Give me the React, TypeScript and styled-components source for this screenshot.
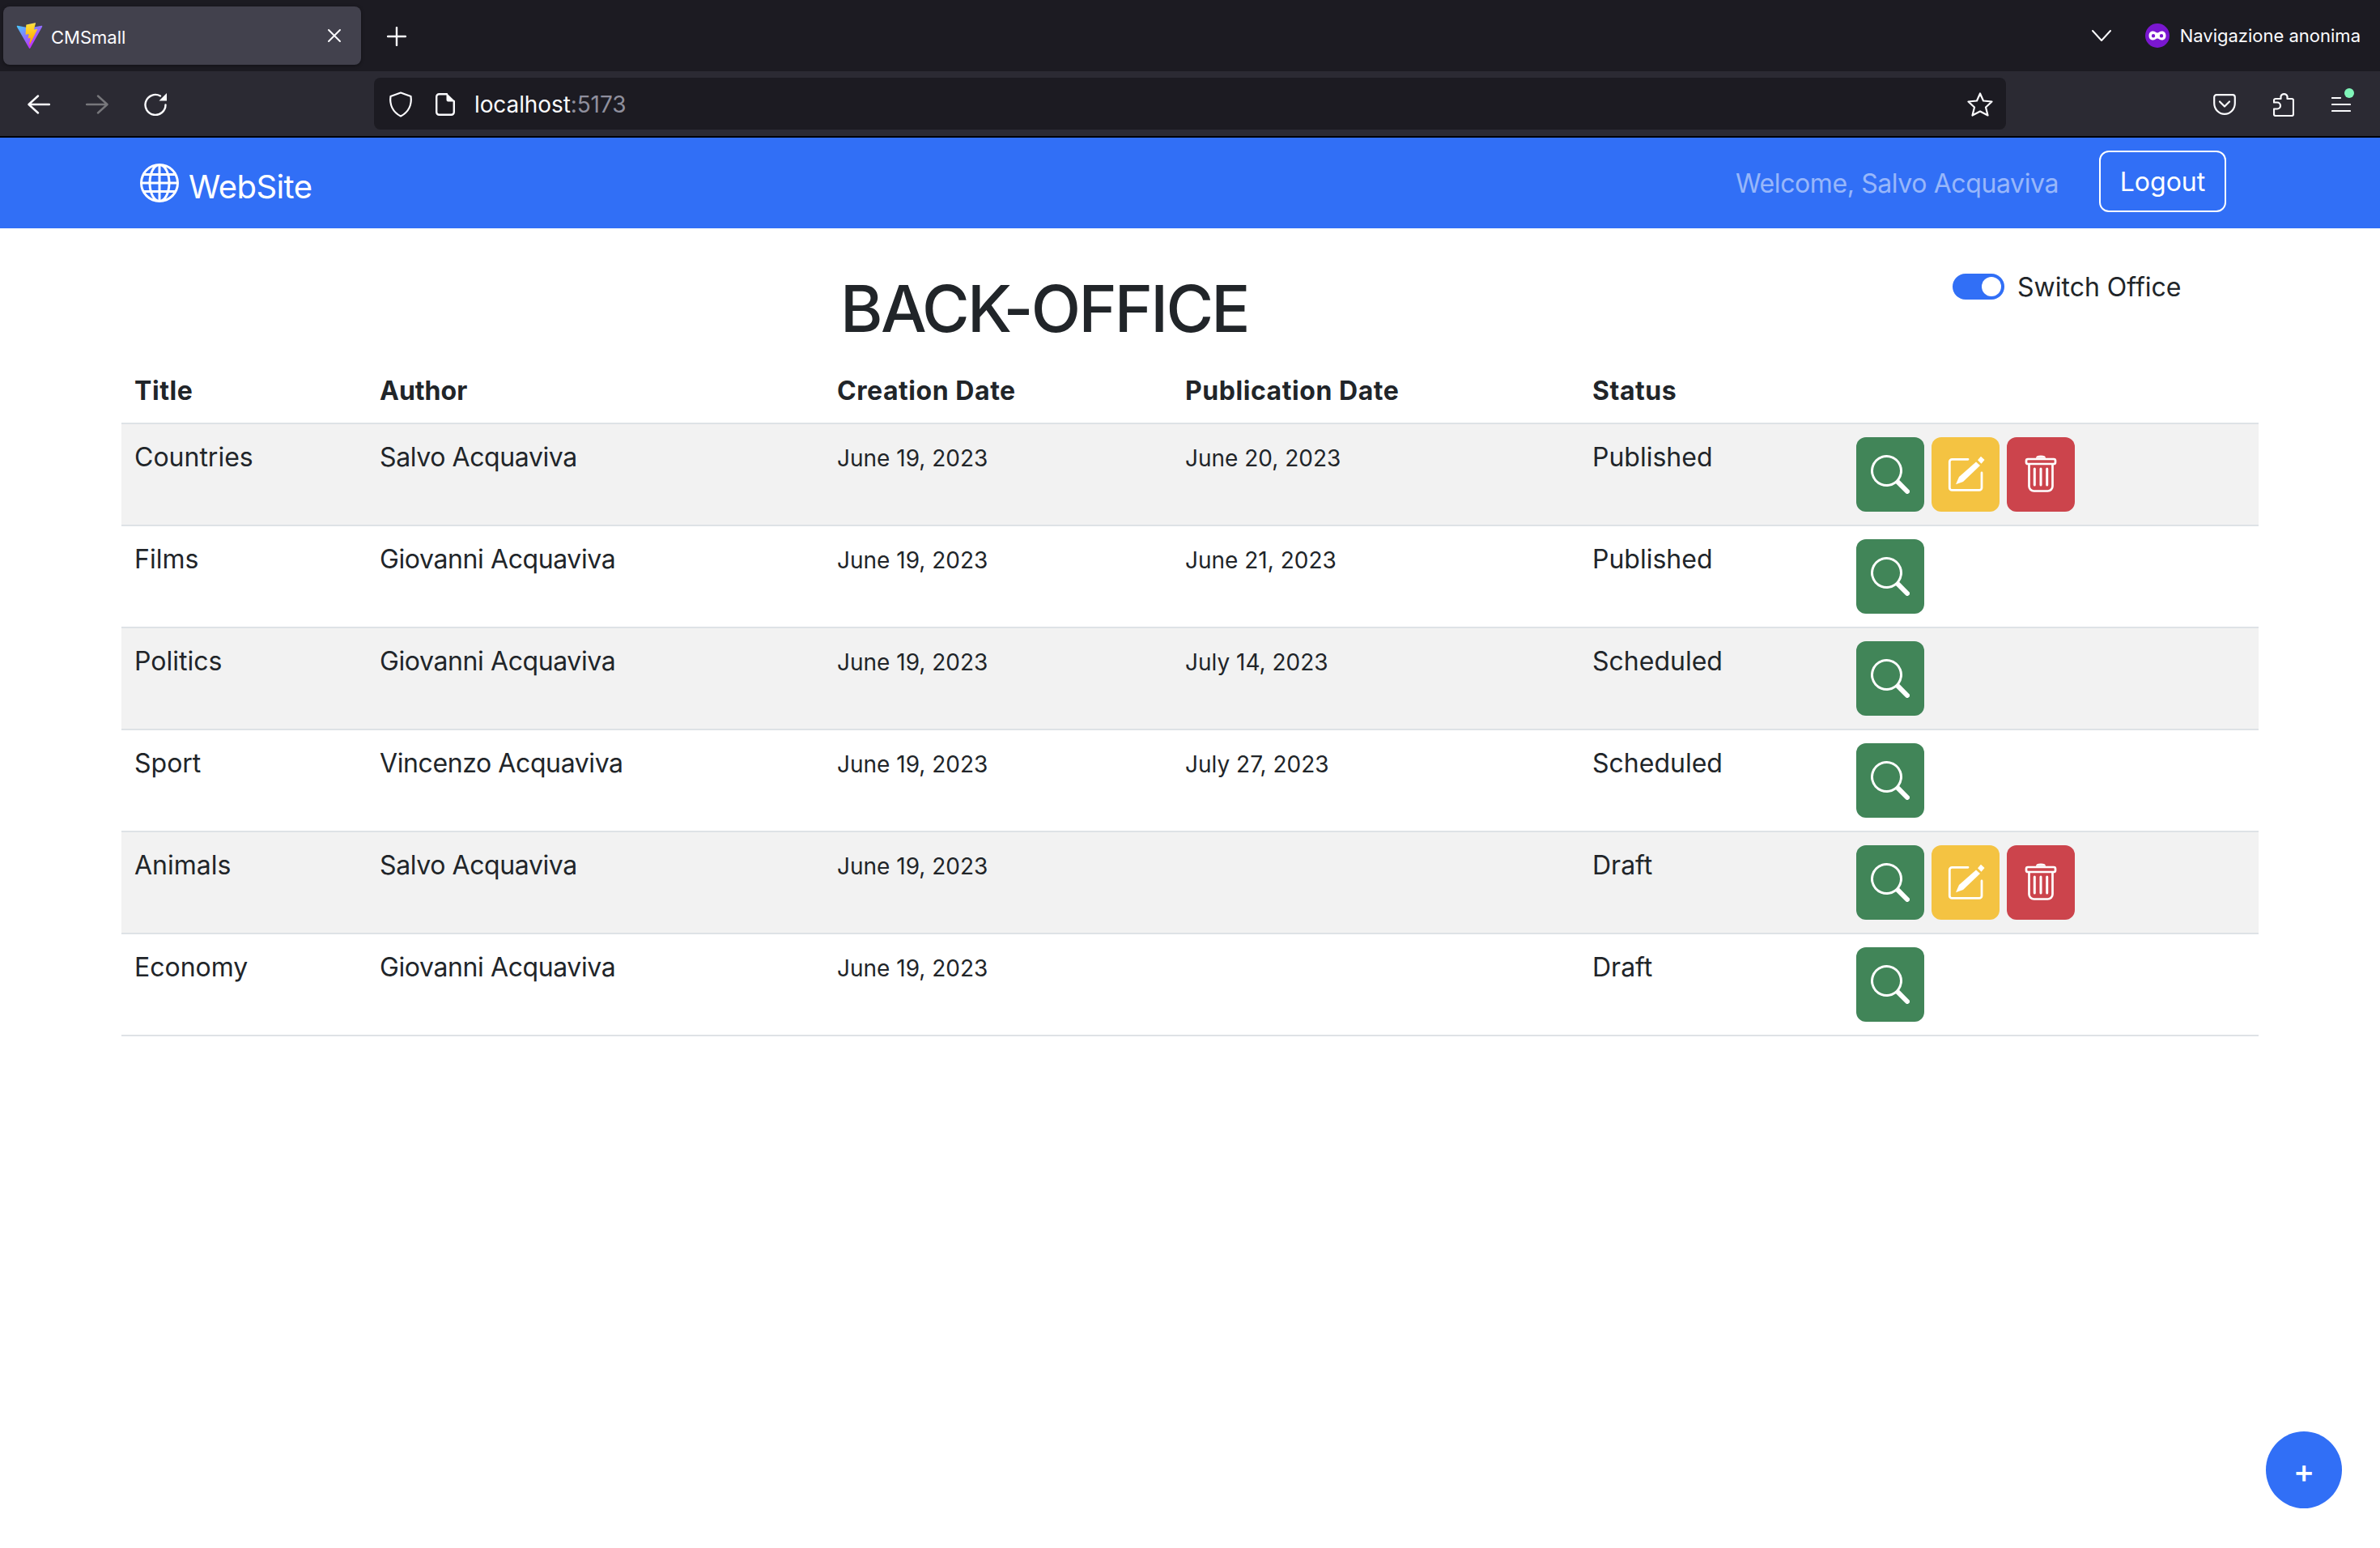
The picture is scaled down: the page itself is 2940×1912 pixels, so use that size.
import React from "react";
import styled, { createGlobalStyle } from "styled-components";
import { BsGlobe, BsSearch } from "react-icons/bs";

const Global = createGlobalStyle`
  html, body { margin: 0; padding: 0; background: #fff; }
  body { font-family: Inter, "Liberation Sans", sans-serif; color: #212529; overflow: hidden; }
  * { box-sizing: border-box; }
`;

const Page = styled.div`
  width: 2940px;
  height: 1912px;
  position: relative;
  overflow: hidden;
  background: #fff;
`;

const TabStrip = styled.div`
  height: 88px;
  background: #1c1b22;
  display: flex;
  align-items: flex-start;
  padding: 8px 24px 0 4px;
`;

const Tab = styled.div`
  width: 442px;
  height: 72px;
  background: #42414d;
  border-radius: 8px;
  display: flex;
  align-items: center;
  padding: 0 24px 0 16px;
  box-shadow: 0 1px 4px rgba(0, 0, 0, 0.4);
`;

const TabTitle = styled.span`
  font-size: 22px;
  color: #fbfbfe;
  margin-left: 10px;
  flex: 1;
  position: relative;
  top: 2px;
`;

const NewTab = styled.div`
  margin: 25px 0 0 32px;
  width: 24px;
  height: 24px;
  display: flex;
`;

const StripRight = styled.div`
  margin-left: auto;
  display: flex;
  align-items: center;
  height: 72px;
`;

const PrivateGap = styled.span`
  width: 41px;
`;

const PrivateLabel = styled.span`
  font-size: 22px;
  color: #fbfbfe;
  margin-left: 13px;
  white-space: nowrap;
`;

const Toolbar = styled.div`
  height: 82px;
  background: #2b2a33;
  border-bottom: 2px solid #000;
  display: flex;
  align-items: flex-start;
  padding: 8px 0 0 34px;
`;

const NavButtons = styled.div`
  width: 428px;
  height: 64px;
  padding-top: 2px;
  display: flex;
  align-items: center;
  gap: 44px;
`;

const UrlBar = styled.div`
  width: 2016px;
  height: 64px;
  background: #1c1b22;
  border-radius: 8px;
  display: flex;
  align-items: center;
  padding: 2px 16px 0 18px;
`;

const UrlText = styled.span`
  font-size: 28px;
  letter-spacing: -0.1px;
  color: #fbfbfe;
  margin-left: 24px;
  flex: 1;
`;

const UrlPort = styled.span`
  color: #8f8f9d;
`;

const ToolRight = styled.div`
  height: 64px;
  padding-top: 2px;
  display: flex;
  align-items: center;
  margin-left: 256px;
  gap: 46px;
`;

const MenuIcon = styled.div`
  position: relative;
  width: 24px;
  height: 18px;
`;

const Dot = styled.span`
  position: absolute;
  right: -4px;
  top: -11px;
  width: 12px;
  height: 12px;
  border-radius: 50%;
  background: #80f5b9;
`;

const Nav = styled.nav`
  height: 112px;
  background: #316ff6;
  display: flex;
  align-items: center;
  padding: 0 190px 4px 173px;
`;

const Brand = styled.div`
  display: flex;
  align-items: center;
  gap: 12px;
  margin-top: 4px;
  color: #fff;
  font-size: 40px;
  line-height: 60px;
`;

const BrandText = styled.span`
  position: relative;
  top: 5px;
  letter-spacing: -0.6px;
`;

const NavRight = styled.div`
  margin-left: auto;
  display: flex;
  align-items: center;
  gap: 50px;
`;

const Welcome = styled.span`
  font-size: 32px;
  letter-spacing: -0.4px;
  color: rgba(255, 255, 255, 0.5);
  position: relative;
  top: 2px;
`;

const Logout = styled.button`
  width: 157px;
  height: 76px;
  border: 2px solid #fff;
  border-radius: 12px;
  background: transparent;
  color: #fff;
  font: 32px Inter, sans-serif;
  padding: 0;
`;

const Content = styled.main`
  padding: 0 150px;
`;

const HeadRow = styled.div`
  height: 160px;
  display: flex;
  align-items: flex-start;
`;

const Title = styled.h1`
  width: 2262px;
  margin: 51px 0 0;
  padding-left: 18px;
  text-align: center;
  font-size: 80px;
  line-height: 96px;
  font-weight: 540;
  letter-spacing: -2.7px;
  color: #212529;
`;

const SwitchRow = styled.div`
  margin-top: 48px;
  display: flex;
  align-items: center;
  gap: 16px;
  font-size: 32px;
  line-height: 48px;
`;

const SwitchLabel = styled.span`
  position: relative;
  top: 1px;
`;

const Track = styled.span`
  width: 64px;
  height: 32px;
  border-radius: 16px;
  background: #316ff6;
  position: relative;
  display: block;
`;

const Knob = styled.span`
  position: absolute;
  right: 4px;
  top: 4px;
  width: 24px;
  height: 24px;
  border-radius: 50%;
  background: #fff;
`;

const Table = styled.table`
  width: 2640px;
  table-layout: fixed;
  border-collapse: separate;
  border-spacing: 0;
`;

const Th = styled.th`
  padding: 17px 16px 15px;
  height: 82px;
  text-align: left;
  font-size: 32px;
  line-height: 48px;
  font-weight: 700;
  letter-spacing: 0.55px;
  border-bottom: 2px solid #dee2e6;
`;

const AuthorTh = styled(Th)`
  letter-spacing: 0;
`;

const Row = styled.tr<{ $odd: boolean }>`
  background: ${(p) => (p.$odd ? "#f2f2f2" : "#fff")};
`;

const Td = styled.td`
  padding: 17px 16px 15px;
  height: 126px;
  vertical-align: top;
  font-size: 32px;
  line-height: 48px;
  border-bottom: 2px solid #dee2e6;
`;

const AuthorTd = styled(Td)`
  letter-spacing: -0.4px;
`;

const ActionsTd = styled(Td)`
  padding: 16px;
`;

const DateText = styled.small`
  font-size: 28px;
`;

const Actions = styled.div`
  display: flex;
  gap: 9px;
`;

const ActionBtn = styled.button<{ $bg: string }>`
  width: 84px;
  height: 92px;
  border: 0;
  padding: 0;
  border-radius: 12px;
  background: ${(p) => p.$bg};
  color: #fff;
  display: flex;
  align-items: center;
  justify-content: center;
`;

const Fab = styled.button`
  position: absolute;
  left: 2799px;
  top: 1768px;
  width: 94px;
  height: 95px;
  border-radius: 50%;
  border: 0;
  background: #316ff6;
  color: #fff;
  font: 500 40px Inter, sans-serif;
  padding: 2px 0 0;
`;

const stroke = { fill: "none", stroke: "currentColor", strokeLinecap: "round" as const, strokeLinejoin: "round" as const };

const ViteLogo = () => (
  <svg width="33" height="33" viewBox="0 0 410 404" fill="none">
    <path d="M399.641 59.5246L215.643 388.545C211.844 395.338 202.084 395.378 198.228 388.618L10.5817 59.5563C6.38087 52.1896 12.6802 43.2665 21.0281 44.7586L205.223 77.6824C206.398 77.8924 207.601 77.8904 208.776 77.6763L389.119 44.8058C397.439 43.2894 403.768 52.1434 399.641 59.5246Z" fill="url(#vg1)" />
    <path d="M292.965 1.5744L156.801 28.2552C154.563 28.6937 152.906 30.5903 152.771 32.8664L144.395 174.33C144.198 177.662 147.258 180.248 150.51 179.498L188.42 170.749C191.967 169.931 195.172 173.055 194.443 176.622L183.18 231.775C182.422 235.487 185.907 238.661 189.532 237.56L212.947 230.446C216.577 229.344 220.065 232.527 219.297 236.242L201.398 322.875C200.278 328.294 207.486 331.249 210.492 326.603L212.5 323.5L323.454 102.072C325.312 98.3645 322.108 94.137 318.036 94.9228L279.014 102.454C275.347 103.161 272.227 99.746 273.262 96.1583L298.731 7.86689C299.767 4.27314 296.636 0.855181 292.965 1.5744Z" fill="url(#vg2)" />
    <defs>
      <linearGradient id="vg1" x1="6" y1="33" x2="235" y2="344" gradientUnits="userSpaceOnUse">
        <stop stopColor="#41D1FF" />
        <stop offset="1" stopColor="#BD34FE" />
      </linearGradient>
      <linearGradient id="vg2" x1="194.65" y1="8.81" x2="236.08" y2="292.99" gradientUnits="userSpaceOnUse">
        <stop stopColor="#FFEA83" />
        <stop offset="0.083" stopColor="#FFDD35" />
        <stop offset="1" stopColor="#FFA800" />
      </linearGradient>
    </defs>
  </svg>
);

const CloseIcon = () => (
  <svg width="18" height="18" viewBox="0 0 18 18" color="#fbfbfe">
    <path d="M2 2L16 16M16 2L2 16" {...stroke} strokeWidth="2" />
  </svg>
);

const PlusIcon = () => (
  <svg width="24" height="24" viewBox="0 0 24 24" color="#fbfbfe">
    <path d="M12 1V23M1 12H23" {...stroke} strokeWidth="2.4" />
  </svg>
);

const Chevron = () => (
  <svg width="26" height="16" viewBox="0 0 26 16" color="#fbfbfe">
    <path d="M2 2L13 14L24 2" {...stroke} strokeWidth="2" />
  </svg>
);

const MaskIcon = () => (
  <svg width="30" height="30" viewBox="0 0 30 30">
    <circle cx="15" cy="15" r="15" fill="#7a17d0" />
    <path fillRule="evenodd" fill="#fff" d="M9.5 9.5C12 9.5 13.5 11.5 15 11.5S18 9.5 20.5 9.5C24 9.5 25.5 12 25.5 15S24 20.5 20.5 20.5C18 20.5 16.5 18.5 15 18.5S12 20.5 9.5 20.5C6 20.5 4.5 18 4.5 15S6 9.5 9.5 9.5ZM10 13A2.2 2.2 0 1 0 10 17.4A2.2 2.2 0 1 0 10 13ZM20 13A2.2 2.2 0 1 0 20 17.4A2.2 2.2 0 1 0 20 13Z" />
  </svg>
);

const ArrowLeft = () => (
  <svg width="28" height="24" viewBox="0 0 28 24" color="#fbfbfe">
    <path d="M27 12H2M13 1.5L1.5 12L13 22.5" {...stroke} strokeWidth="2.4" />
  </svg>
);

const ArrowRight = () => (
  <svg width="28" height="24" viewBox="0 0 28 24" color="#77777b">
    <path d="M1 12H26M15 1.5L26.5 12L15 22.5" {...stroke} strokeWidth="2.4" />
  </svg>
);

const Reload = () => (
  <svg width="28" height="28" viewBox="0 0 28 28" color="#fbfbfe">
    <path d="M26.5 14.5A12.5 12.5 0 1 1 20 3.5" {...stroke} strokeWidth="2.4" />
    <path d="M28 0V9.5H18.5Z" fill="currentColor" />
  </svg>
);

const Shield = () => (
  <svg width="30" height="32" viewBox="0 0 30 32" color="#fbfbfe">
    <path d="M15 1.5L27.5 6C29 16 25 25.5 15 30.5C5 25.5 1 16 2.5 6Z" {...stroke} strokeWidth="2.2" />
  </svg>
);

const DocWrap = styled.span`
  margin-left: 28px;
  display: flex;
`;

const DocIcon = () => (
  <DocWrap>
    <svg width="24" height="28" viewBox="0 0 24 28" color="#fbfbfe">
      <path d="M14 1.2H4.5A3.3 3.3 0 0 0 1.2 4.5V23.5A3.3 3.3 0 0 0 4.5 26.8H19.5A3.3 3.3 0 0 0 22.8 23.5V10" {...stroke} strokeWidth="2.4" />
      <path d="M13.5 1.2H15L23 9V10.5H15.5A2 2 0 0 1 13.5 8.5Z" fill="currentColor" />
    </svg>
  </DocWrap>
);

const Star = () => (
  <svg width="32" height="30" viewBox="0 0 32 30" color="#fbfbfe">
    <path d="M16 1.5L20 10.5L30.5 11.5L23 18.5L25.5 28.5L16 23.5L6.5 28.5L9 18.5L1.5 11.5L12 10.5Z" {...stroke} strokeWidth="2.2" />
  </svg>
);

const Pocket = () => (
  <svg width="28" height="26" viewBox="0 0 28 26" color="#fbfbfe">
    <path d="M4 1.2H24A2.8 2.8 0 0 1 26.8 4V11.5C26.8 19 21 24.8 14 24.8S1.2 19 1.2 11.5V4A2.8 2.8 0 0 1 4 1.2Z" {...stroke} strokeWidth="2.2" />
    <path d="M8 9.5L14 15.5L20 9.5" {...stroke} strokeWidth="2.2" />
  </svg>
);

const Puzzle = () => (
  <svg width="26" height="30" viewBox="0 0 26 30" color="#fbfbfe">
    <path d="M3 29H23A2 2 0 0 0 25 27V10A2 2 0 0 0 23 8H17.5V5A4.2 4.2 0 0 0 9.5 5V8H3A2 2 0 0 0 1 10V12.5H5A3.8 3.8 0 0 1 5 20.5H1V27A2 2 0 0 0 3 29Z" {...stroke} strokeWidth="2.2" />
  </svg>
);

const MenuLines = () => (
  <svg width="24" height="18" viewBox="0 0 24 18" color="#fbfbfe">
    <path d="M1 1H11M1 9H23M1 17H23" {...stroke} strokeWidth="2.2" />
  </svg>
);

const EditIcon = () => (
  <svg width="48" height="48" viewBox="0 0 48 48">
    <path d="M27 5.3H7.3A3 3 0 0 0 4.3 8.3V40.4A3 3 0 0 0 7.3 43.4H41A3 3 0 0 0 44 40.4V22" {...stroke} strokeWidth="2.8" />
    <path d="M12 36.3L16 27L37 8.5L42 13L21 33Z" fill="currentColor" />
    <path d="M39 6.3L43 1.7L47.5 6L43.5 10.7Z" fill="currentColor" />
  </svg>
);

const TrashIcon = () => (
  <svg width="48" height="48" viewBox="0 0 48 48">
    <path d="M18 3.7C18 1.5 20 0.5 24 0.5S30 1.5 30 3.7Z" fill="currentColor" />
    <rect x="6" y="5" width="36" height="6" rx="2" {...stroke} strokeWidth="2.7" />
    <path d="M9.5 11.5V38.5A6 6 0 0 0 15.5 44.5H32.5A6 6 0 0 0 38.5 38.5V11.5" {...stroke} strokeWidth="2.7" />
    <path d="M16.3 17V37M24 17V37M31.7 17V37" {...stroke} strokeWidth="3" />
  </svg>
);

type PageRow = { title: string; author: string; created: string; published: string; status: string; own: boolean };

const rows: PageRow[] = [
  { title: "Countries", author: "Salvo Acquaviva", created: "June 19, 2023", published: "June 20, 2023", status: "Published", own: true },
  { title: "Films", author: "Giovanni Acquaviva", created: "June 19, 2023", published: "June 21, 2023", status: "Published", own: false },
  { title: "Politics", author: "Giovanni Acquaviva", created: "June 19, 2023", published: "July 14, 2023", status: "Scheduled", own: false },
  { title: "Sport", author: "Vincenzo Acquaviva", created: "June 19, 2023", published: "July 27, 2023", status: "Scheduled", own: false },
  { title: "Animals", author: "Salvo Acquaviva", created: "June 19, 2023", published: "", status: "Draft", own: true },
  { title: "Economy", author: "Giovanni Acquaviva", created: "June 19, 2023", published: "", status: "Draft", own: false },
];

const colWidths = [303, 565, 430, 503, 326, 513];

export default function App() {
  return (
    <Page>
      <Global />
      <TabStrip>
        <Tab>
          <ViteLogo />
          <TabTitle>CMSmall</TabTitle>
          <CloseIcon />
        </Tab>
        <NewTab>
          <PlusIcon />
        </NewTab>
        <StripRight>
          <Chevron />
          <PrivateGap />
          <MaskIcon />
          <PrivateLabel>Navigazione anonima</PrivateLabel>
        </StripRight>
      </TabStrip>
      <Toolbar>
        <NavButtons>
          <ArrowLeft />
          <ArrowRight />
          <Reload />
        </NavButtons>
        <UrlBar>
          <Shield />
          <DocIcon />
          <UrlText>
            localhost<UrlPort>:5173</UrlPort>
          </UrlText>
          <Star />
        </UrlBar>
        <ToolRight>
          <Pocket />
          <Puzzle />
          <MenuIcon>
            <MenuLines />
            <Dot />
          </MenuIcon>
        </ToolRight>
      </Toolbar>
      <Nav>
        <Brand>
          <BsGlobe size={48} />
          <BrandText>WebSite</BrandText>
        </Brand>
        <NavRight>
          <Welcome>Welcome, Salvo Acquaviva</Welcome>
          <Logout>Logout</Logout>
        </NavRight>
      </Nav>
      <Content>
        <HeadRow>
          <Title>BACK-OFFICE</Title>
          <SwitchRow>
            <Track>
              <Knob />
            </Track>
            <SwitchLabel>Switch Office</SwitchLabel>
          </SwitchRow>
        </HeadRow>
        <Table>
          <colgroup>
            {colWidths.map((w, i) => (
              <col key={i} width={w} />
            ))}
          </colgroup>
          <thead>
            <tr>
              <Th>Title</Th>
              <AuthorTh>Author</AuthorTh>
              <Th>Creation Date</Th>
              <Th>Publication Date</Th>
              <Th>Status</Th>
              <Th />
            </tr>
          </thead>
          <tbody>
            {rows.map((r, i) => (
              <Row key={r.title} $odd={i % 2 === 0}>
                <Td>{r.title}</Td>
                <AuthorTd>{r.author}</AuthorTd>
                <Td>
                  <DateText>{r.created}</DateText>
                </Td>
                <Td>
                  <DateText>{r.published}</DateText>
                </Td>
                <Td>{r.status}</Td>
                <ActionsTd>
                  <Actions>
                    <ActionBtn $bg="#418558">
                      <BsSearch size={48} />
                    </ActionBtn>
                    {r.own && (
                      <ActionBtn $bg="#f4c342">
                        <EditIcon />
                      </ActionBtn>
                    )}
                    {r.own && (
                      <ActionBtn $bg="#cc444c">
                        <TrashIcon />
                      </ActionBtn>
                    )}
                  </Actions>
                </ActionsTd>
              </Row>
            ))}
          </tbody>
        </Table>
      </Content>
      <Fab>+</Fab>
    </Page>
  );
}
